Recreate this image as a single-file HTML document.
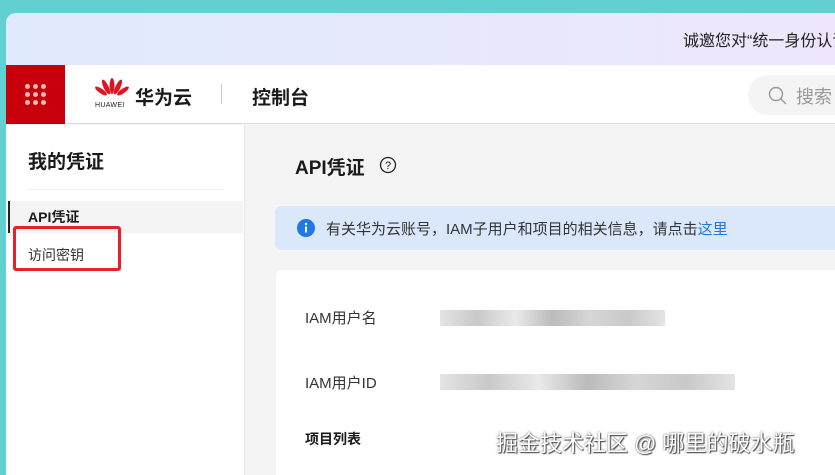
<!DOCTYPE html>
<html><head><meta charset="utf-8"><style>
*{margin:0;padding:0;box-sizing:border-box}
body{width:835px;height:475px;background:#62d0d0;position:relative;overflow:hidden;font-family:"Liberation Sans","Noto Sans CJK SC",sans-serif;color:#1a1a1a}
.win{position:absolute;left:6px;top:13px;width:829px;height:462px;background:#f4f4f4;border-top-left-radius:10px;overflow:hidden}
.banner{position:absolute;left:0;top:0;width:100%;height:52px;background:linear-gradient(90deg,#dfeafc,#e6e9fb 50%,#efe6fb)}
.banner span{position:absolute;left:677px;top:14px;font-size:16px;color:#222;white-space:nowrap}
.hdr{position:absolute;left:0;top:52px;width:100%;height:59px;background:#fff;border-bottom:1px solid #ddd}
.red{position:absolute;left:0;top:0;width:59px;height:59px;background:#c7000b}
.dots{position:absolute;left:19px;top:19px;width:22px;height:22px}
.dots i{position:absolute;width:5px;height:5px;border-radius:50%;background:#f7b9bb}
.side{position:absolute;left:0;top:112px;width:239px;height:400px;background:#fff;border-right:1px solid #e6e6e6}
.info{position:absolute;left:269px;top:193px;width:580px;height:44px;background:#dbe8fb;border-radius:6px}
.card{position:absolute;left:270px;top:257px;width:580px;height:230px;background:#fff;border-radius:6px}
.blur{position:absolute;height:16px;background:linear-gradient(90deg,#ddd,#bbb,#e4e4e4,#aaa,#ccc,#bbb,#ddd);opacity:.8}
span,div{white-space:nowrap}
</style></head><body>
<div class="win">
 <div class="banner"><span>诚邀您对“统一身份认证</span></div>
 <div class="hdr">
  <div class="red"><div class="dots">
   <i style="left:0;top:0"></i><i style="left:8px;top:0"></i><i style="left:16px;top:0"></i>
   <i style="left:0;top:8px"></i><i style="left:8px;top:8px"></i><i style="left:16px;top:8px"></i>
   <i style="left:0;top:16px"></i><i style="left:8px;top:16px"></i><i style="left:16px;top:16px"></i></div></div>
  <svg style="position:absolute;left:89px;top:13px" width="34" height="22" viewBox="0 0 34 22">
   <g fill="#e0141e"><ellipse cx="17" cy="8" rx="2.5" ry="8"/><ellipse cx="11" cy="9" rx="2.5" ry="8" transform="rotate(-25 11 9)"/><ellipse cx="23" cy="9" rx="2.5" ry="8" transform="rotate(25 23 9)"/><ellipse cx="6" cy="13" rx="2.3" ry="7" transform="rotate(-55 6 13)"/><ellipse cx="28" cy="13" rx="2.3" ry="7" transform="rotate(55 28 13)"/></g></svg>
  <div style="position:absolute;left:89px;top:37px;font-size:7px;letter-spacing:.3px">HUAWEI</div>
  <div style="position:absolute;left:129px;top:18px;font-size:19px;font-weight:bold">华为云</div>
  <div style="position:absolute;left:215px;top:19px;width:1px;height:20px;background:#ccc"></div>
  <div style="position:absolute;left:246px;top:18px;font-size:19px;font-weight:bold">控制台</div>
  <div style="position:absolute;left:742px;top:10px;width:120px;height:40px;border-radius:20px;background:#f4f4f4">
   <svg style="position:absolute;left:20px;top:11px" width="20" height="20" viewBox="0 0 20 20"><circle cx="8" cy="8" r="6.5" fill="none" stroke="#999" stroke-width="1.4"/><path d="M13 13l5 5" stroke="#999" stroke-width="1.4"/></svg>
   <span style="position:absolute;left:48px;top:8px;font-size:18px;color:#999">搜索</span></div>
 </div>
 <div class="side">
  <div style="position:absolute;left:22px;top:22px;font-size:19px;font-weight:bold">我的凭证</div>
  <div style="position:absolute;left:22px;top:64px;width:196px;height:1px;background:#eee"></div>
  <div style="position:absolute;left:2px;top:76px;width:235px;height:32px;background:#f4f4f4;border-left:2px solid #222"></div>
  <div style="position:absolute;left:22px;top:82px;font-size:14px;font-weight:bold">API凭证</div>
  <div style="position:absolute;left:22px;top:120px;font-size:14px;color:#333">访问密钥</div>
  <div style="position:absolute;left:7px;top:101px;width:108px;height:45px;border:3px solid #e8202a;border-radius:3px"></div>
 </div>
 <div style="position:absolute;left:289px;top:140px;font-size:19px;font-weight:bold">API凭证</div>
 <svg style="position:absolute;left:373px;top:143px" width="18" height="18" viewBox="0 0 18 18"><circle cx="9" cy="9" r="7.5" fill="none" stroke="#222" stroke-width="1.3"/><text x="9" y="13" font-size="11" text-anchor="middle" font-family="Liberation Sans" fill="#222">?</text></svg>
 <div class="info">
  <svg style="position:absolute;left:22px;top:13px" width="18" height="18" viewBox="0 0 18 18"><circle cx="9" cy="9" r="9" fill="#1f78e6"/><rect x="8" y="7.5" width="2" height="6" fill="#fff"/><circle cx="9" cy="5" r="1.2" fill="#fff"/></svg>
  <span style="position:absolute;left:51px;top:12px;font-size:15px;color:#333">有关华为云账号，IAM子用户和项目的相关信息，请点击<span style="color:#1f78e6">这里</span></span>
 </div>
 <div class="card">
  <div style="position:absolute;left:29px;top:37px;font-size:15px;color:#333">IAM用户名</div>
  <div class="blur" style="left:164px;top:40px;width:225px"></div>
  <div style="position:absolute;left:29px;top:102px;font-size:15px;color:#333">IAM用户ID</div>
  <div class="blur" style="left:164px;top:104px;width:295px"></div>
  <div style="position:absolute;left:29px;top:159px;font-size:14px;font-weight:bold">项目列表</div>
 </div>
 <div style="position:absolute;left:490px;top:413px;font-size:22px;color:#fff;text-shadow:0 0 2px #555,1px 1px 1px #444">掘金技术社区 @ 哪里的破水瓶</div>
</div>
</body></html>
